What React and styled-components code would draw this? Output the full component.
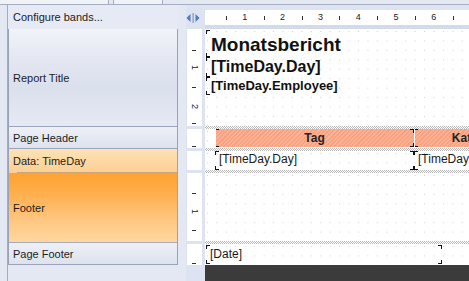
import React from 'react';
import styled, { createGlobalStyle, css } from 'styled-components';

const Global = createGlobalStyle`
  html, body { margin: 0; padding: 0; }
  body {
    width: 469px; height: 281px; overflow: hidden;
    background: #e3e8f3;
    font-family: "Liberation Sans", Arial, sans-serif;
  }
`;

const markLayers = (c, l) => {
  const g = `linear-gradient(${c},${c})`;
  return {
    img: Array(8).fill(g).join(','),
    size: `${l}px 1px, 1px ${l}px, ${l}px 1px, 1px ${l}px, ${l}px 1px, 1px ${l}px, ${l}px 1px, 1px ${l}px`,
    pos: 'left top, left top, right top, right top, left bottom, left bottom, right bottom, right bottom',
  };
};

const framed = (base) => {
  const m = markLayers('#111', 4);
  return css`
    background-image: ${m.img}${base ? `, ${base}` : ''};
    background-size: ${m.size}${base ? ', 100% 100%' : ''};
    background-position: ${m.pos}${base ? ', 0 0' : ''};
    background-repeat: no-repeat;
  `;
};

const Root = styled.div`
  width: 469px; height: 281px;
  display: flex; flex-direction: column;
  overflow: hidden;
  background: #e3e8f3;
`;

const TabStrip = styled.div`
  height: 5px; flex: none;
  display: flex;
  box-sizing: border-box;
  border-bottom: 1px solid #a5aec2;
  background: #e3e8f3;
`;

const TabStub = styled.div`
  width: ${p => p.$w}px;
  margin-left: ${p => p.$ml || 0}px;
  box-sizing: border-box;
  background: #f0f2f8;
  border-left: ${p => (p.$ml ? '1px solid #a5aec2' : 'none')};
  border-right: 1px solid #a5aec2;
`;

const Body = styled.div`
  flex: 1; min-height: 0;
  display: flex;
`;

const Sidebar = styled.div`
  width: 186px; flex: none;
  display: flex;
`;

const SideEdge = styled.div`
  width: 8px; flex: none;
  box-sizing: border-box;
  border-right: 1px solid #a3adc2;
`;

const BandPanel = styled.div`
  width: 170px; flex: none;
  display: flex; flex-direction: column;
`;

const ConfigureRow = styled.div`
  height: 24px; flex: none;
  display: flex; align-items: center;
  padding-left: 5px;
  font-size: 11px;
  color: #1c1c1c;
  background: #e6eaf4;
`;

const BandList = styled.div`
  display: flex; flex-direction: column;
  box-sizing: border-box;
  border-left: 1px solid #98a3ba;
  border-right: 1px solid #98a3ba;
`;

const itemBg = {
  normal: css`
    background: linear-gradient(#f1f3f9 0%, #e2e6f1 35%, #dbe0ed 60%, #e6e9f3 100%);
    border-bottom: 1px solid #9aa5bc;
  `,
  small: css`
    background: linear-gradient(#eef0f7 0%, #dde2ee 100%);
    border-bottom: 1px solid #9aa5bc;
  `,
  dataSel: css`
    background:
      linear-gradient(#c9a67c, #c9a67c) 8px 100% / calc(100% - 8px) 1px no-repeat,
      linear-gradient(#fde2b6 0%, #fccf92 100%);
  `,
  footerSel: css`
    background: linear-gradient(#ffa232 0%, #ffac47 25%, #ffc57d 65%, #ffd8a0 100%);
    border-bottom: 1px solid #a8aab8;
  `,
};

const BandItem = styled.div`
  height: ${p => p.$h}px; flex: none;
  box-sizing: border-box;
  display: flex; align-items: center;
  padding-left: 4px;
  font-size: 11px;
  color: #1c1c1c;
  ${p => itemBg[p.$v || 'normal']}
`;

const Designer = styled.div`
  flex: 1; min-width: 0;
  display: flex; flex-direction: column;
  background: #dde3f0;
`;

const RulerRow = styled.div`
  height: 24px; flex: none;
  display: flex;
`;

const ArrowBox = styled.div`
  width: 19px; flex: none;
  display: flex; align-items: center;
  padding-top: 1px;
  box-sizing: border-box;
`;

const HRuler = styled.div`
  flex: 1;
  margin-top: 5px; height: 15px;
  background: #fff;
  position: relative;
  border-bottom: 4px solid #d3dae8;
`;

const HTick = styled.span`
  position: absolute; top: 6px;
  width: 1px; height: 4px;
  background: #333;
`;

const HNum = styled.span`
  position: absolute; top: 2px;
  width: 10px; margin-left: -5px;
  text-align: center;
  font-size: 9px; line-height: 11px;
  color: #222;
`;

const BandRow = styled.div`
  height: ${p => p.$h}px; flex: none;
  display: flex;
  padding-left: 1px;
`;

const VRuler = styled.div`
  width: 15px; flex: none;
  margin-right: 3px;
  background: #fff;
  position: relative;
`;

const VTick = styled.span`
  position: absolute; left: 5px;
  width: 4px; height: 1px;
  background: #333;
`;

const VNum = styled.span`
  position: absolute; left: 2px;
  width: 11px; height: 11px; margin-top: -5px;
  text-align: center;
  font-size: 9px; line-height: 11px;
  color: #222;
  transform: rotate(90deg);
`;

const PageBand = styled.div`
  flex: 1; min-width: 0;
  overflow: hidden;
  background-color: #fff;
  background-image:
    linear-gradient(90deg, transparent 0 1px, #fff 1px),
    linear-gradient(180deg, #cfcfcf 0 1px, #fff 1px);
  background-size: 9.45px 9.45px;
  background-position: 2px 2px;
  display: flex;
  flex-direction: ${p => (p.$col ? 'column' : 'row')};
  align-items: flex-start;
`;

const SepRow = styled.div`
  height: 3px; flex: none;
  display: flex;
  padding-left: 19px;
`;

const Hatch = styled.div`
  flex: 1;
  background: repeating-conic-gradient(#b9b9b9 0 25%, #ffffff 0 50%) 0 0 / 2px 2px;
`;

const DarkRow = styled.div`
  flex: 1;
  display: flex;
  padding-left: 19px;
`;

const Dark = styled.div`
  flex: 1;
  background: #3b3b3b;
`;

const TitleFrame = styled.div`
  width: 420px; flex: none;
  height: ${p => p.$h}px;
  margin-left: 1px;
  margin-top: ${p => p.$mt || 0}px;
  box-sizing: border-box;
  padding-left: 5px;
  padding-top: ${p => p.$pt || 0}px;
  font-weight: bold;
  font-size: ${p => p.$fs}px;
  line-height: ${p => p.$lh}px;
  color: #111;
  white-space: nowrap;
  ${framed()}
`;

const CellRow = styled.div`
  display: flex;
  margin-left: 10px;
  margin-top: ${p => p.$mt || 0}px;
  flex: none;
`;

const HeadCell = styled.div`
  width: ${p => p.$w}px; height: 18px; flex: none;
  display: flex; align-items: center; justify-content: center;
  font-size: 12px; font-weight: bold;
  color: #222;
  white-space: nowrap;
  ${framed('repeating-linear-gradient(135deg, #f9a282 0 1.5px, #fbb193 1.5px 3px)')}
  box-shadow: inset 1px 0 0 #fff;
`;

const DataCell = styled.div`
  width: ${p => p.$w}px; height: 19px; flex: none;
  box-sizing: border-box;
  padding: 1px 0 0 4px;
  font-size: 12px; line-height: 14px;
  color: #1a1a1a;
  white-space: nowrap;
  overflow: hidden;
  ${framed()}
`;

const FooterFrame = styled.div`
  width: 236px; height: 19px; flex: none;
  margin: 1px 0 0 1px;
  box-sizing: border-box;
  padding-left: 4px;
  font-size: 12px; line-height: 18px;
  color: #1a1a1a;
  ${framed()}
`;

const ArrowsIcon = () => (
  <svg width="15" height="10" viewBox="0 0 15 10">
    <polygon points="4.5,1 4.5,9 0.5,5" fill="#4f79c6" />
    <rect x="6.5" y="0" width="1.2" height="10" fill="#8c97ae" />
    <polygon points="9.5,1 9.5,9 13.5,5" fill="#4f79c6" />
  </svg>
);

const Ruler = ({ marks }) => (
  <VRuler>
    {marks.map((m, i) =>
      m.label ? (
        <VNum key={i} style={{ top: m.y }}>{m.label}</VNum>
      ) : (
        <VTick key={i} style={{ top: m.y }} />
      )
    )}
  </VRuler>
);

const CM = 37.8;
const hMarks = [];
for (let n = 1; n <= 7; n++) {
  hMarks.push({ x: 2 + CM * (n - 0.5), tick: true });
  if (n < 7) hMarks.push({ x: 2 + CM * n, label: String(n) });
}

export default function App() {
  return (
    <Root>
      <Global />
      <TabStrip>
        <TabStub $w={109} />
        <TabStub $w={50} $ml={4} />
      </TabStrip>
      <Body>
        <Sidebar>
          <SideEdge />
          <BandPanel>
            <ConfigureRow>Configure bands...</ConfigureRow>
            <BandList>
              <BandItem $h={98}>Report Title</BandItem>
              <BandItem $h={22} $v="small">Page Header</BandItem>
              <BandItem $h={24} $v="dataSel">Data: TimeDay</BandItem>
              <BandItem $h={70} $v="footerSel">Footer</BandItem>
              <BandItem $h={22} $v="small">Page Footer</BandItem>
            </BandList>
          </BandPanel>
        </Sidebar>
        <Designer>
          <RulerRow>
            <ArrowBox><ArrowsIcon /></ArrowBox>
            <HRuler>
              {hMarks.map((m, i) =>
                m.tick ? (
                  <HTick key={i} style={{ left: m.x }} />
                ) : (
                  <HNum key={i} style={{ left: m.x }}>{m.label}</HNum>
                )
              )}
            </HRuler>
          </RulerRow>

          <BandRow $h={97}>
            <Ruler marks={[{ y: 21 }, { y: 38, label: '1' }, { y: 58 }, { y: 77, label: '2' }, { y: 94 }]} />
            <PageBand $col>
              <TitleFrame $h={27} $fs={19} $lh={25} $mt={1} $pt={2}>Monatsbericht</TitleFrame>
              <TitleFrame $h={20} $fs={16} $lh={20}>[TimeDay.Day]</TitleFrame>
              <TitleFrame $h={18} $fs={13} $lh={18}>[TimeDay.Employee]</TitleFrame>
            </PageBand>
          </BandRow>
          <SepRow><Hatch /></SepRow>

          <BandRow $h={19}>
            <Ruler marks={[{ y: 17 }]} />
            <PageBand>
              <CellRow>
                <HeadCell $w={199}>Tag</HeadCell>
                <HeadCell $w={131}>Kategorie</HeadCell>
              </CellRow>
            </PageBand>
          </BandRow>
          <SepRow><Hatch /></SepRow>

          <BandRow $h={19}>
            <Ruler marks={[]} />
            <PageBand>
              <CellRow>
                <DataCell $w={199}>[TimeDay.Day]</DataCell>
                <DataCell $w={131}>[TimeDay.Kategorie]</DataCell>
              </CellRow>
            </PageBand>
          </BandRow>
          <SepRow><Hatch /></SepRow>

          <BandRow $h={68}>
            <Ruler marks={[{ y: 20 }, { y: 38, label: '1' }, { y: 57 }]} />
            <PageBand />
          </BandRow>
          <SepRow><Hatch /></SepRow>

          <BandRow $h={21}>
            <Ruler marks={[{ y: 19 }]} />
            <PageBand>
              <FooterFrame>[Date]</FooterFrame>
            </PageBand>
          </BandRow>
          <DarkRow><Dark /></DarkRow>
        </Designer>
      </Body>
    </Root>
  );
}
